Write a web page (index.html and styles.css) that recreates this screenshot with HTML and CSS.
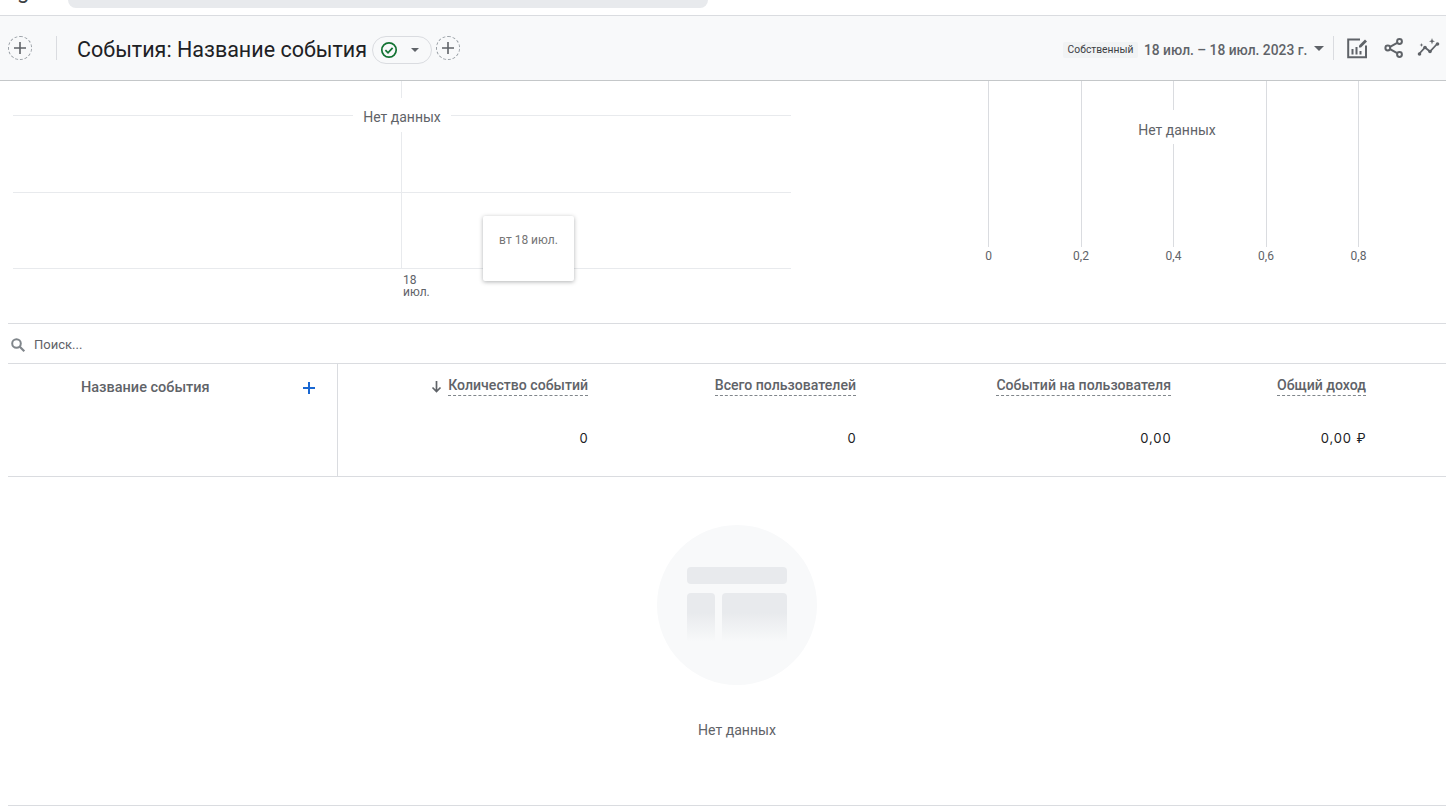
FILE: index.html
```html
<!DOCTYPE html>
<html lang="ru">
<head>
<meta charset="utf-8">
<title>События: Название события</title>
<link rel="stylesheet" href="styles.css">
</head>
<body>
<div class="topbar">
  <span class="logo-g">g</span>
  <div class="search-pill"></div>
</div>
<header class="header">
  <div class="round-add"><svg width="12" height="12" viewBox="0 0 12 12"><path d="M6 0v12M0 6h12" stroke="#5f6368" stroke-width="1.6"/></svg></div>
  <div class="divider"></div>
  <h1 class="title">События: Название события</h1>
  <div class="status-pill">
    <svg width="18" height="18" viewBox="0 0 18 18"><circle cx="9" cy="9" r="7.200" fill="none" stroke="#137333" stroke-width="1.700"/><path d="M5.400 9.200l2.600 2.600 4.600-5" fill="none" stroke="#137333" stroke-width="1.700"/></svg>
    <span class="caret small"></span>
  </div>
  <div class="round-add second"><svg width="12" height="12" viewBox="0 0 12 12"><path d="M6 0v12M0 6h12" stroke="#5f6368" stroke-width="1.6"/></svg></div>
  <div class="header-right">
    <span class="chip">Собственный</span>
    <span class="date">18 июл. – 18 июл. 2023 г.</span>
    <span class="caret"></span>
    <div class="divider right"></div>
    <svg class="tool first" width="22" height="22" viewBox="0 0 22 22"><path d="M14 2.500H2.200v17.800H20V8.500" fill="none" stroke="#5f6368" stroke-width="2"/><path d="M6.500 12v5.500M10.500 10v7.500M14.500 14v3.500" stroke="#5f6368" stroke-width="2"/><path d="M13 8.500l6-6 2 2-6 6h-2z" fill="#5f6368"/></svg>
    <svg class="tool share" width="22" height="22" viewBox="0 0 22 22"><g fill="none" stroke="#5f6368" stroke-width="2"><circle cx="16.500" cy="4.500" r="2.400"/><circle cx="4.800" cy="11" r="2.400"/><circle cx="16.500" cy="17.500" r="2.400"/><path d="M7 9.800l7.200-4M7 12.200l7.200 4"/></g></svg>
    <svg class="tool last" width="24" height="22" viewBox="0 0 24 22"><path d="M2 17l6-6.500 5 4 7.500-8" fill="none" stroke="#5f6368" stroke-width="1.800"/><g fill="#5f6368"><circle cx="2.500" cy="17" r="1.800"/><circle cx="8" cy="10.500" r="1.800"/><circle cx="13" cy="14.500" r="1.800"/><circle cx="20.500" cy="7" r="1.800"/><path d="M15 1l.8 2.400 2.200.8-2.200.8-.8 2.400-.8-2.400-2.200-.8 2.200-.8zM4.500 6l.5 1.500 1.500.5-1.500.5-.5 1.500-.5-1.500L2.500 8l1.500-.5z"/></g></svg>
  </div>
</header>
<section class="charts">
  <div class="chart-left">
    <svg class="grid-lines" width="778" height="220" viewBox="0 0 778 220">
      <path d="M0 34.500h778M0 111.500h778M0 187.500h778M388.500 0v188" stroke="#e8eaed" fill="none"/>
    </svg>
    <span class="no-data left">Нет данных</span>
    <div class="x-label">18<br>июл.</div>
    <div class="tooltip">вт 18 июл.</div>
  </div>
  <div class="chart-right">
    <div class="tick"><i class="tick-line"></i><span class="tick-label">0</span></div>
    <div class="tick"><i class="tick-line"></i><span class="tick-label">0,2</span></div>
    <div class="tick"><i class="tick-line"></i><span class="tick-label">0,4</span></div>
    <div class="tick"><i class="tick-line"></i><span class="tick-label">0,6</span></div>
    <div class="tick"><i class="tick-line"></i><span class="tick-label">0,8</span></div>
    <span class="no-data right">Нет данных</span>
  </div>
</section>
<section class="report">
  <div class="search-row">
    <svg width="16" height="16" viewBox="0 0 16 16"><circle cx="6.500" cy="6.500" r="4.300" fill="none" stroke="#80868b" stroke-width="2"/><path d="M9.800 9.800l4.500 4.500" stroke="#80868b" stroke-width="2.200"/></svg>
    <span>Поиск...</span>
  </div>
  <div class="table">
    <div class="dim-col">
      <span class="dim-name">Название события</span>
      <svg class="add-dim" width="12" height="12" viewBox="0 0 12 12"><path d="M6 0v12M0 6h12" stroke="#1967d2" stroke-width="2"/></svg>
    </div>
    <div class="metrics">
      <div class="metric">
        <div class="metric-head"><svg width="11" height="12" viewBox="0 0 11 12"><path d="M5.500 0v10M1.500 6.500l4 4 4-4" fill="none" stroke="#5f6368" stroke-width="1.700"/></svg><span class="metric-name">Количество событий</span></div>
        <div class="metric-value">0</div>
      </div>
      <div class="metric">
        <div class="metric-head"><span class="metric-name">Всего пользователей</span></div>
        <div class="metric-value">0</div>
      </div>
      <div class="metric">
        <div class="metric-head"><span class="metric-name">Событий на пользователя</span></div>
        <div class="metric-value">0,00</div>
      </div>
      <div class="metric">
        <div class="metric-head"><span class="metric-name">Общий доход</span></div>
        <div class="metric-value">0,00 ₽</div>
      </div>
    </div>
  </div>
  <div class="empty">
    <div class="empty-circle">
      <div class="empty-bar"></div>
      <div class="empty-row">
        <div class="empty-block narrow"></div>
        <div class="empty-block wide"></div>
      </div>
    </div>
    <div class="empty-text">Нет данных</div>
  </div>
</section>
</body>
</html>
```
FILE: styles.css
```css
* { box-sizing: border-box; }
html, body { margin: 0; padding: 0; }
body {
  width: 1446px;
  height: 810px;
  overflow: hidden;
  background: #fff;
  font-family: Roboto, "Noto Sans", sans-serif;
  color: #5f6368;
}

/* top strip */
.topbar {
  height: 16px;
  border-bottom: 1px solid #dadce0;
  display: flex;
  overflow: hidden;
}
.logo-g {
  margin: -22px 0 0 17px;
  width: 51px;
  font-size: 22px;
  line-height: 26px;
  color: #3c4043;
}
.search-pill {
  width: 640px;
  height: 8px;
  background: #e8eaed;
  border-radius: 0 0 8px 8px;
}

/* header */
.header {
  height: 65px;
  background: #f8f9fa;
  border-bottom: 1px solid #c4c7c9;
  display: flex;
  align-items: center;
  padding-left: 8px;
}
.round-add {
  width: 24px;
  height: 24px;
  border: 1px dashed #9aa0a6;
  border-radius: 50%;
  display: flex;
  align-items: center;
  justify-content: center;
  flex: none;
}
.round-add.second { margin-left: 4px; }
.divider { width: 1px; height: 24px; background: #dadce0; margin: 0 20px 0 24px; flex: none; }
.title {
  margin: 4px 0 0;
  font-size: 21.500px;
  line-height: 28px;
  font-weight: 400;
  color: #202124;
  width: 295px;
  white-space: nowrap;
  flex: none;
}
.status-pill {
  width: 60px;
  height: 28px;
  margin-top: 4px;
  border: 1px solid #dadce0;
  border-radius: 14px;
  display: flex;
  align-items: center;
  padding-left: 7px;
  gap: 13px;
  flex: none;
}
.caret {
  width: 0;
  height: 0;
  border-left: 5px solid transparent;
  border-right: 5px solid transparent;
  border-top: 5px solid #5f6368;
  flex: none;
}
.caret.small { border-left-width: 4px; border-right-width: 4px; border-top-width: 4px; }
.header-right {
  margin-left: auto;
  display: flex;
  align-items: center;
  height: 100%;
}
.chip {
  width: 75px;
  height: 16px;
  background: #f1f3f4;
  border-radius: 2px;
  font-size: 10.300px;
  line-height: 16px;
  text-align: center;
  color: #3c4043;
  margin-top: 4px;
}
.date {
  width: 170px;
  margin-left: 6px;
  font-size: 13.800px;
  font-weight: 500;
  white-space: nowrap;
  margin-top: 4px;
}
.header-right .caret { margin-top: 1px; }
.divider.right { margin: 0 0 0 9px; }
.tool { flex: none; margin-left: 14px; }
.tool.first { margin-left: 12px; }
.tool.share { margin-left: 15px; }
.tool.last { margin: 0 5px 0 12px; }

/* charts */
.charts {
  height: 243px;
  margin-left: 8px;
  display: flex;
  position: relative;
  border-bottom: 1px solid #dadce0;
}
.chart-left {
  position: relative;
  width: 934px;
  flex: none;
}
.grid-lines { position: absolute; left: 5px; top: 0; }
.no-data {
  position: absolute;
  height: 34px;
  background: #fff;
  font-size: 14px;
  line-height: 34px;
  white-space: nowrap;
  text-align: center;
}
.no-data.left { left: 345px; top: 17px; width: 98px; padding-top: 2px; }
.no-data.right { left: 185.750px; top: 29px; width: 98px; padding-top: 3px; }
.x-label {
  position: absolute;
  left: 395px;
  top: 193px;
  font-size: 12px;
  line-height: 12px;
}
.tooltip {
  position: absolute;
  left: 475px;
  top: 135px;
  width: 91px;
  height: 65px;
  background: #fff;
  border-radius: 2px;
  box-shadow: 0 1px 4px rgba(60, 64, 67, .4);
  padding-top: 17px;
  font-size: 12px;
  line-height: 14px;
  text-align: center;
  color: #757575;
}
.chart-right {
  position: relative;
  display: flex;
  align-items: stretch;
  height: 186px;
  margin-left: .25px;
}
.tick {
  width: 92.500px;
  display: flex;
  flex-direction: column;
  align-items: center;
}
.tick-line { display: block; width: 1px; height: 166px; background: #dadce0; }
.tick-label { font-size: 12px; line-height: 16px; margin-top: 1px; }

/* report */
.report { margin-left: 8px; }
.search-row {
  height: 40px;
  border-bottom: 1px solid #dadce0;
  display: flex;
  align-items: center;
  padding: 2px 0 0 2px;
  gap: 8px;
  font-size: 13px;
}
.table {
  height: 113px;
  border-bottom: 1px solid #dadce0;
  display: flex;
}
.dim-col {
  width: 330px;
  flex: none;
  border-right: 1px solid #dadce0;
  position: relative;
  padding: 15px 0 0 73px;
}
.dim-name { font-size: 14.500px; font-weight: 500; line-height: 17px; display: block; }
.add-dim { position: absolute; left: 295px; top: 18px; }
.metrics {
  display: grid;
  grid-template-columns: 250px 268px 315px 195px;
}
.metric { display: flex; flex-direction: column; align-items: flex-end; }
.metric-head {
  height: 32px;
  margin-top: 13px;
  display: flex;
  align-items: flex-start;
  gap: 6px;
}
.metric-head svg { margin-top: 4px; }
.metric-name {
  font-size: 14.100px;
  font-weight: 500;
  line-height: 17px;
  height: 19px;
  border-bottom: 1px dashed #80868b;
}
.metric-value {
  margin: 20px -.5px 0 0;
  font-family: Inter, Roboto, sans-serif;
  font-size: 13px;
  letter-spacing: .9px;
  line-height: 18px;
  color: #202124;
}

/* empty */
.empty {
  height: 329px;
  border-bottom: 1px solid #dadce0;
  padding: 48px 0 0 20px;
  display: flex;
  flex-direction: column;
  align-items: center;
}
.empty-circle {
  width: 160px;
  height: 160px;
  border-radius: 50%;
  background: #f8f9fa;
  padding: 42px 30px 0;
}
.empty-bar { height: 17px; background: #e8eaed; border-radius: 4px; }
.empty-row { display: flex; gap: 7px; margin-top: 9px; }
.empty-block {
  height: 49px;
  border-radius: 4px 4px 0 0;
  background: linear-gradient(#e8eaed 40%, #f8f9fa 100%);
}
.empty-block.narrow { width: 28px; }
.empty-block.wide { width: 65px; }
.empty-text { margin-top: 36px; font-size: 14.100px; line-height: 18px; }
```
